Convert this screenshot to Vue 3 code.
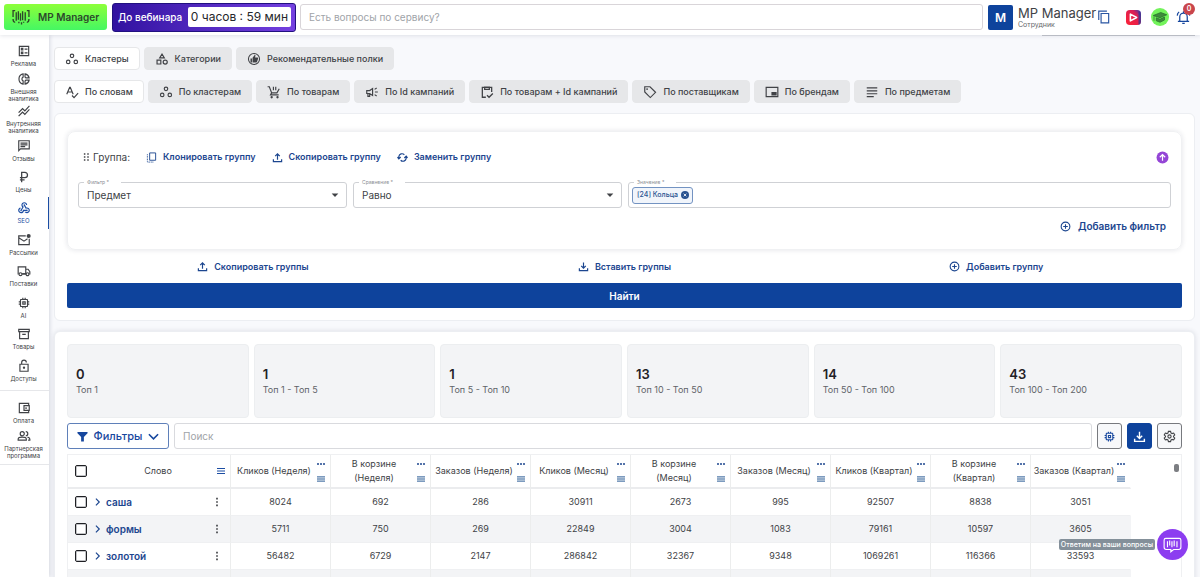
<script setup>
import { ref } from 'vue'

const s = (d, w = 2) => `<path d="${d}" fill="none" stroke="currentColor" stroke-width="${w}"/>`
const f = (d) => `<path d="${d}" fill="currentColor" fill-rule="evenodd"/>`

const icons = {
  ballot: s('M4 4h16v16H4zM7.500 7.500h2.500v2.500H7.500zM7.500 14h2.500v2.500H7.500zM13 8.700h5M13 15.300h5'),
  pie: s('M10.500 3.200a9 9 0 0 0 0 17.600v-5.600a3.500 3.500 0 0 1 0-6.400zM13.800 3.200a9 9 0 0 1 7 7h-5.600l-1.400-1.600zM13.800 20.800a9 9 0 0 0 7-7h-5.600l-1.400 1.600z'),
  trend: f('M2 19.990l7.500-7.510 4 4 7.090-7.970L22 9.920l-8.500 9.560-4-4-6 6.010zM3.500 15.490l6-6.010 4 4L22 3.920l-1.410-1.410-7.090 7.970-4-4L2 13.990z'),
  message: s('M3 3h18v14H6l-3 3zM6 7h12M6 10h12M6 13h8'),
  ruble: s('M8 21V4h5.500a4.500 4.500 0 0 1 0 9H5M5 17h8', 2.200),
  webhook: f('M10 15h5.880c.27-.31.67-.5 1.120-.5.83 0 1.500.67 1.500 1.500s-.67 1.500-1.500 1.500c-.44 0-.84-.19-1.120-.5H11.900c-.46 2.280-2.480 4-4.900 4-2.760 0-5-2.240-5-5 0-2.420 1.720-4.440 4-4.900v2.070c-1.160.41-2 1.530-2 2.830 0 1.650 1.350 3 3 3s3-1.350 3-3v-1zm2.500-11c1.650 0 3 1.350 3 3h2c0-2.760-2.240-5-5-5s-5 2.240-5 5c0 1.430.6 2.710 1.550 3.620l-2.350 3.900c-.68.14-1.200.75-1.200 1.480 0 .83.67 1.500 1.500 1.500s1.500-.67 1.500-1.500c0-.16-.02-.31-.07-.45l3.380-5.630C10.490 9.610 9.500 8.420 9.500 7c0-1.650 1.350-3 3-3zM17 13c-.64 0-1.230.2-1.720.54l-3.050-5.070C11.530 8.350 11 7.740 11 7c0-.83.67-1.500 1.500-1.500S14 6.170 14 7c0 .15-.02.29-.06.43l2.190 3.650c.28-.05.57-.08.87-.08 2.760 0 5 2.240 5 5s-2.240 5-5 5c-1.850 0-3.470-1.010-4.330-2.500h2.670c.48.32 1.050.5 1.660.5 1.650 0 3-1.350 3-3s-1.350-3-3-3z'),
  mail: s('M15 5H3v15h18V10M3 8l9 6 6-4') + '<circle cx="20" cy="5" r="3.500" fill="currentColor"/>',
  truck: s('M3 17H2V5h13v12H9M15 9h4l3 4v4h-1') + s('M8.500 17.500a2.500 2.500 0 1 1-5 0 2.500 2.500 0 0 1 5 0zM20.500 17.500a2.500 2.500 0 1 1-5 0 2.500 2.500 0 0 1 5 0zM9 17h6'),
  chip: f('M15 9H9v6h6V9zm-2 4h-2v-2h2v2zm8-2V9h-2V7c0-1.100-.9-2-2-2h-2V3h-2v2h-2V3H9v2H7c-1.100 0-2 .9-2 2v2H3v2h2v2H3v2h2v2c0 1.100.9 2 2 2h2v2h2v-2h2v2h2v-2h2c1.100 0 2-.9 2-2v-2h2v-2h-2v-2h2zm-4 6H7V7h10v10z'),
  archive: s('M3 4h18v4H3zM4.500 8v12h15V8M9 12.500h6'),
  lock: s('M5 9h14v12H5zM8 9V6a4 4 0 0 1 8 0') + '<circle cx="12" cy="15" r="2" fill="currentColor"/>',
  wallet: s('M20 7V4H4v16h16v-3M12 8h9v8h-9z') + '<circle cx="15.500" cy="12" r="1.500" fill="currentColor"/>',
  group: s('M12.500 8a3.500 3.500 0 1 1-7 0 3.500 3.500 0 0 1 7 0zM2 19v-2c0-2 4-3.200 7-3.200s7 1.200 7 3.200v2zM15 4.500a3.500 3.500 0 0 1 0 7M18 14c2 .6 4 1.500 4 3v2h-3'),
  clusters: s('M15 6.500a3 3 0 1 1-6 0 3 3 0 0 1 6 0zM8.500 17a3 3 0 1 1-6 0 3 3 0 0 1 6 0zM21.500 17a3 3 0 1 1-6 0 3 3 0 0 1 6 0z'),
  category: s('M12 3.500l4 6.500H8zM3.500 14h6.500v6.500H3.500zM21 17.300a3.500 3.500 0 1 1-7 0 3.500 3.500 0 0 1 7 0z'),
  recommend: s('M21.500 12a9.500 9.500 0 1 1-19 0 9.500 9.500 0 0 1 19 0z', 1.800) + f('M6 11h2.500v7H6zM9.500 10l4-5.500 1 .8-.6 4.200h4.600l.6 1.500-2 6-1.200 1.200H9.500z'),
  spell: s('M3 16L8 4h1l5 12M5 12h7M12 18l3.500 3.500 7-7.500'),
  cart: s('M1 3h3l4 10.500h9l4-7M8 13.500L6 17H20M11 3v6M15 3v6', 2) + '<circle cx="8" cy="21" r="2" fill="currentColor"/><circle cx="18" cy="21" r="2" fill="currentColor"/>',
  campaign: s('M3 9.500h5l5-3.500v12l-5-3.500H3zM5 15v4.500h3V15M17 12h5M16.500 7.500l3.500-2.500M16.500 16.500l3.500 2.500'),
  clipboard: s('M10 21H4V4h16v8M8 3.500h8v4H8zM12 17.500l3.500 3.500L22 14.500', 2.200),
  tag: s('M3 3h9l9.500 9.500-9 9L3 12z') + '<circle cx="7" cy="7" r="1.500" fill="currentColor"/>',
  brand: s('M2 4h20v16H2z') + f('M11 12h9v6h-9z'),
  lines: s('M3 5h18M3 10h18M3 15h18M3 20h12'),
  drag: f('M5 2h4v4H5zM5 10h4v4H5zM5 18h4v4H5zM14 2h4v4h-4zM14 10h4v4h-4zM14 18h4v4h-4z'),
  clone: s('M8 2h13v16H8z') + s('M3 5v17h14', 2).replace('/>', ' stroke-dasharray="2 1.500"/>'),
  upload: s('M12 17V5M7 9l5-5 5 5M3 16v5h18v-5', 2.600),
  download: s('M12 3v12M7 10.500l5 5 5-5M3 16v5h18v-5', 2.600),
  swap: s('M4 14V10A7 7 0 0 1 16 6M20 10v4A7 7 0 0 1 8 18M1 11l3 4 4-4M16 13l4-4 3 4', 2.600),
  plus: s('M21.500 12a9.500 9.500 0 1 1-19 0 9.500 9.500 0 0 1 19 0zM12 7v10M7 12h10', 2.400),
  up: '<circle cx="12" cy="12" r="11" fill="currentColor"/><path d="M12 18V7M7 11.500L12 6.500l5 5" fill="none" stroke="#fff" stroke-width="2.200"/>',
  close: '<circle cx="12" cy="12" r="12" fill="currentColor"/><path d="M8 8l8 8M16 8l-8 8" stroke="#fff" stroke-width="2.500"/>',
  caret: f('M4 8.500h16L12 17z'),
  funnel: f('M1 2h22v3l-8 8v10H9v-10L1 5z'),
  down: s('M2 7l10 10 10-10', 3.500),
  right: s('M7 4l8 8-8 8', 2.800),
  gear: s('M10 2.500h4l.7 3 2 1.100 3-.9 2 3.500-2.300 2.100v1.400l2.300 2.100-2 3.500-3-.9-2 1.100-.7 3h-4l-.7-3-2-1.100-3 .9-2-3.500 2.300-2.100v-1.400L2.300 9.200l2-3.500 3 .9 2-1.100zM15 12a3 3 0 1 1-6 0 3 3 0 0 1 6 0z'),
  kebab: f('M10 2h4v4h-4zM10 10h4v4h-4zM10 18h4v4h-4z'),
  copy: s('M17 2H3v15M7 6h13v16H7z'),
  bell: s('M6 18v-7a6 6 0 0 1 12 0v7M3 18h18M12 2v3M10 21.500h4M2 9a8 8 0 0 1 3-6M22 9a8 8 0 0 0-3-6'),
}

const nav = [
  ['ballot', 'Реклама'], ['pie', 'Внешняя аналитика'], ['trend', 'Внутренняя аналитика'], ['message', 'Отзывы'],
  ['ruble', 'Цены'], ['webhook', 'SEO'], ['mail', 'Рассылки'], ['truck', 'Поставки'], ['chip', 'AI'],
  ['archive', 'Товары'], ['lock', 'Доступы'],
]
const navExtra = [['wallet', 'Оплата'], ['group', 'Партнерская программа']]
const modes = [['clusters', 'Кластеры'], ['category', 'Категории'], ['recommend', 'Рекомендательные полки']]
const views = [
  ['spell', 'По словам'], ['clusters', 'По кластерам'], ['cart', 'По товарам'], ['campaign', 'По Id кампаний'],
  ['clipboard', 'По товарам + Id кампаний'], ['tag', 'По поставщикам'], ['brand', 'По брендам'], ['lines', 'По предметам'],
]
const stats = [
  ['0', 'Топ 1'], ['1', 'Топ 1 - Топ 5'], ['1', 'Топ 5 - Топ 10'], ['13', 'Топ 10 - Топ 50'],
  ['14', 'Топ 50 - Топ 100'], ['43', 'Топ 100 - Топ 200'],
]
const columns = ['Неделя', 'Месяц', 'Квартал'].flatMap((p) => [`Кликов (${p})`, `В корзине\n(${p})`, `Заказов (${p})`])
const rows = [
  ['саша', 8024, 692, 286, 30911, 2673, 995, 92507, 8838, 3051],
  ['формы', 5711, 750, 269, 22849, 3004, 1083, 79161, 10597, 3605],
  ['золотой', 56482, 6729, 2147, 286842, 32367, 9348, 1069261, 116366, 33593],
]
const mode = ref(0)
const view = ref(0)
const section = ref('SEO')
</script>

<template>
  <div class="app">
    <header class="top">
      <button class="brand">
        <svg viewBox="0 0 34 30"><path d="M6 3H2v12M6 25c-3 0-4-3-4-6M28 3h4v12M28 25c3 0 4-3 4-6M8 6v16M12 4v16M16 8v14M20 4v17M25 6v16M13 24v3M18 25v4M22 24v2" fill="none" stroke="currentColor" stroke-width="2.500" /></svg>
        MP Manager
      </button>
      <div class="webinar"><span>До вебинара</span><strong>0 часов : 59 мин</strong></div>
      <input class="ask" type="text" placeholder="Есть вопросы по сервису?" aria-label="Есть вопросы по сервису?">
      <div class="user">
        <div class="avatar">M</div>
        <div class="who"><span>MP Manager</span><small>Сотрудник</small></div>
        <button class="plain copy" aria-label="Копировать"><svg viewBox="0 0 24 24" v-html="icons.copy" /></button>
      </div>
      <button class="plain video" aria-label="Видео">
        <svg viewBox="0 0 24 24">
          <defs><linearGradient id="vid" x1="0" y1="1" x2="1" y2="0"><stop offset=".2" stop-color="#f5213d" /><stop offset=".7" stop-color="#d91f55" /><stop offset="1" stop-color="#2b40b8" /></linearGradient></defs>
          <rect width="24" height="24" rx="6" fill="url(#vid)" /><path d="M20 2q4 1 4 5v12q0 4-4 5z" fill="#243c9c" opacity=".7" /><path d="M7 6.500v11L17 12z" fill="none" stroke="#fff" stroke-width="2.500" stroke-linejoin="round" />
        </svg>
      </button>
      <button class="plain learn" aria-label="Обучение">
        <svg viewBox="0 0 24 24"><circle cx="12" cy="12" r="12" fill="#73f35b" /><path d="M3 10l10-4 8 3-9 4zM7 13v4l5 2 6-3v-4l-6 3zM4 11v6" fill="#3f8a3c" stroke="#26702b" /></svg>
      </button>
      <button class="plain bell" aria-label="Уведомления"><svg viewBox="0 0 24 24" v-html="icons.bell" /><span class="badge">0</span></button>
    </header>

    <div class="body">
      <nav class="side">
        <div class="group main-group">
          <a v-for="[icon, label] in nav" :key="label" href="#" :class="{ active: section === label }" @click.prevent="section = label">
            <svg viewBox="0 0 24 24" v-html="icons[icon]" /><span>{{ label }}</span>
          </a>
        </div>
        <div class="group extra-group">
          <a v-for="[icon, label] in navExtra" :key="label" href="#" @click.prevent="section = label">
            <svg viewBox="0 0 24 24" v-html="icons[icon]" /><span>{{ label }}</span>
          </a>
        </div>
      </nav>

      <main class="content">
        <div class="peek" />
        <div class="tabs modes">
          <button v-for="([icon, label], i) in modes" :key="label" :class="{ on: mode === i }" @click="mode = i">
            <svg viewBox="0 0 24 24" v-html="icons[icon]" />{{ label }}
          </button>
        </div>
        <div class="tabs">
          <button v-for="([icon, label], i) in views" :key="label" :class="{ on: view === i }" @click="view = i">
            <svg viewBox="0 0 24 24" v-html="icons[icon]" />{{ label }}
          </button>
        </div>

        <section class="card query">
          <div class="filter-group">
            <div class="group-head">
              <span class="group-name"><svg viewBox="0 0 24 24" v-html="icons.drag" />Группа:</span>
              <button class="link"><svg viewBox="0 0 24 24" v-html="icons.clone" />Клонировать группу</button>
              <button class="link"><svg viewBox="0 0 24 24" v-html="icons.upload" />Скопировать группу</button>
              <button class="link"><svg viewBox="0 0 24 24" v-html="icons.swap" />Заменить группу</button>
              <button class="plain collapse" aria-label="Свернуть"><svg viewBox="0 0 24 24" v-html="icons.up" /></button>
            </div>
            <div class="fields">
              <div class="field">
                <label for="f-subject">Фильтр *</label>
                <select id="f-subject"><option>Предмет</option></select>
                <svg class="caret" viewBox="0 0 24 24" v-html="icons.caret" />
              </div>
              <div class="field">
                <label for="f-compare">Сравнение *</label>
                <select id="f-compare"><option>Равно</option></select>
                <svg class="caret" viewBox="0 0 24 24" v-html="icons.caret" />
              </div>
              <div class="field">
                <label for="f-value">Значение *</label>
                <span class="chip">[24] Кольца<button class="plain" aria-label="Удалить"><svg viewBox="0 0 24 24" v-html="icons.close" /></button></span>
                <input id="f-value" type="text">
              </div>
            </div>
            <button class="link add-filter"><svg viewBox="0 0 24 24" v-html="icons.plus" />Добавить фильтр</button>
          </div>
          <div class="group-actions">
            <button class="link"><svg viewBox="0 0 24 24" v-html="icons.upload" />Скопировать группы</button>
            <button class="link"><svg viewBox="0 0 24 24" v-html="icons.download" />Вставить группы</button>
            <button class="link"><svg viewBox="0 0 24 24" v-html="icons.plus" />Добавить группу</button>
          </div>
          <button class="find">Найти</button>
        </section>

        <section class="card results">
          <div class="stats">
            <div v-for="[value, label] in stats" :key="label" class="stat"><b>{{ value }}</b><span>{{ label }}</span></div>
          </div>
          <div class="toolbar">
            <button class="filters"><svg viewBox="0 0 24 24" v-html="icons.funnel" />Фильтры<svg viewBox="0 0 24 24" v-html="icons.down" /></button>
            <input type="text" placeholder="Поиск" aria-label="Поиск">
            <button class="square blue" aria-label="AI"><svg viewBox="0 0 24 24" v-html="icons.chip" /></button>
            <button class="square solid" aria-label="Скачать"><svg viewBox="0 0 24 24" v-html="icons.download" /></button>
            <button class="square" aria-label="Настройки"><svg viewBox="0 0 24 24" v-html="icons.gear" /></button>
          </div>
          <div class="table-wrap">
            <table>
              <colgroup><col class="c-word"><col v-for="c in columns" :key="c" class="c-num"></colgroup>
              <thead>
                <tr>
                  <th><div class="word-head"><input type="checkbox" aria-label="Выбрать все"><span>Слово</span><svg class="sort" viewBox="0 0 8 8"><path d="M0 1.500h8M0 4h8M0 6.500h8" stroke="currentColor" /></svg></div></th>
                  <th v-for="c in columns" :key="c">
                    <div class="num-head">
                      <span>{{ c }}</span>
                      <div class="marks">
                        <svg viewBox="0 0 8 8"><path d="M0 4h2M3 4h2M6 4h2" stroke="currentColor" stroke-width="1.500" /></svg>
                        <svg viewBox="0 0 8 8"><rect y="1" width="8" height="6" fill="#a9bdd3" /><path d="M0 1.500h8M0 4h8M0 6.500h8" stroke="#7d9bbf" /></svg>
                      </div>
                    </div>
                  </th>
                </tr>
              </thead>
              <tbody>
                <tr v-for="[word, ...nums] in rows" :key="word">
                  <td>
                    <div class="word-cell">
                      <input type="checkbox" :aria-label="word">
                      <svg viewBox="0 0 24 24" v-html="icons.right" />
                      <a href="#">{{ word }}</a>
                      <button class="plain more" aria-label="Меню"><svg viewBox="0 0 24 24" v-html="icons.kebab" /></button>
                    </div>
                  </td>
                  <td v-for="(n, i) in nums" :key="i">{{ n }}</td>
                </tr>
                <tr>
                  <td><div class="word-cell"><input type="checkbox" aria-label="Выбрать строку"></div></td>
                  <td v-for="c in columns" :key="c" />
                </tr>
              </tbody>
            </table>
            <div class="thumb" />
          </div>
        </section>
      </main>
    </div>

    <div class="help">
      <span>Ответим на ваши вопросы</span>
      <button aria-label="Чат"><svg viewBox="0 0 34 30"><path d="M5 4h24q3 0 3 3v13q0 4-4 4h-9l-5 4v-4H6q-4 0-4-4V7q0-3 3-3zM8 9v11M12 8v9M16 9v11M20 8v10M25 9v11" fill="none" stroke="#fff" stroke-width="2" /></svg></button>
    </div>
  </div>
</template>

<style>
html,
body {
  margin: 0;
  background: #f8f9fc;
}
</style>

<style scoped>
.app,
.app * {
  box-sizing: border-box;
}

.app {
  height: 100vh;
  display: flex;
  flex-direction: column;
  overflow: hidden;
  color: #404246;
  font: 9px/14px Inter, "Open Sans", sans-serif;
}

button,
input,
select {
  font: inherit;
  color: inherit;
  margin: 0;
}

button {
  cursor: pointer;
  white-space: nowrap;
}

svg {
  display: block;
  flex: none;
}

a {
  text-decoration: none;
  color: inherit;
}

.plain {
  border: 0;
  padding: 0;
  background: none;
}

.top {
  position: relative;
  z-index: 2;
  flex: none;
  display: flex;
  align-items: center;
  height: 35px;
  padding: 0 9px 1px 4px;
  background: #fff;
  box-shadow: 0 1px 4px rgba(40, 50, 80, 0.12);
}

.brand {
  display: flex;
  align-items: center;
  gap: 8px;
  width: 103px;
  height: 26px;
  padding: 0 8px;
  border: 0;
  border-radius: 3px;
  background: linear-gradient(#8dff39, #45f763);
  color: #2d472a;
  font-size: 10px;
  font-weight: 600;
}

.brand svg {
  width: 18px;
  height: 16px;
}

.webinar {
  display: flex;
  align-items: center;
  justify-content: space-between;
  width: 184px;
  height: 29px;
  margin: 0 4px 0 5px;
  padding: 0 4px 0 5px;
  border: 1px solid #211080;
  border-radius: 3px;
  background: linear-gradient(90deg, #3112a0, #7440e0);
  color: #fff;
  font-size: 10px;
  font-weight: 500;
  white-space: nowrap;
}

.webinar strong {
  padding: 0 3px;
  border-radius: 2px;
  background: #fff;
  color: #26272b;
  font-size: 12px;
  font-weight: 400;
  line-height: 20px;
}

.ask {
  flex: 1;
  min-width: 0;
  height: 26px;
  padding: 0 8px;
  border: 1px solid #d9d5d9;
  border-radius: 3px;
  background: #fff;
  font-size: 10px;
}

input::placeholder {
  color: #a0a3a8;
  opacity: 1;
}

.user {
  display: flex;
  align-items: center;
  gap: 5px;
  margin-left: 5px;
}

.avatar {
  width: 25px;
  height: 25px;
  border-radius: 2px;
  background: #0e439c;
  color: #fff;
  font-size: 12px;
  font-weight: 600;
  line-height: 25px;
  text-align: center;
}

.who {
  display: flex;
  flex-direction: column;
  width: 74px;
  white-space: nowrap;
  font-size: 13px;
  line-height: 14px;
}

.who small {
  font-size: 7px;
  line-height: 9px;
  color: #66686c;
}

.copy svg {
  width: 14px;
  height: 14px;
  color: #2a56a3;
}

.video {
  margin-left: 15px;
}

.video svg {
  width: 15px;
  height: 15px;
}

.learn {
  margin-left: 10px;
}

.learn svg {
  width: 18px;
  height: 18px;
}

.bell {
  position: relative;
  margin-left: 7px;
  color: #17479e;
}

.bell svg {
  width: 15px;
  height: 15px;
}

.badge {
  position: absolute;
  top: -7px;
  right: -4px;
  width: 12px;
  height: 12px;
  border-radius: 50%;
  background: #c9454b;
  color: #fff;
  font-size: 7px;
  font-weight: 600;
  line-height: 12px;
}

.body {
  flex: 1;
  min-height: 0;
  display: flex;
}

.side {
  flex: none;
  width: 49px;
  background: #fff;
  box-shadow: 1px 0 4px rgba(40, 50, 80, 0.16);
}

.group {
  display: flex;
  flex-direction: column;
  border-bottom: 1px solid #e6e7ea;
}

.main-group {
  height: 356px;
  padding: 5px 0 4px;
}

.extra-group {
  height: 74px;
  padding: 6px 0 4px;
}

.group a {
  flex: 1;
  display: flex;
  flex-direction: column;
  align-items: center;
  justify-content: center;
  gap: 2px;
  padding-right: 1px;
  border-right: 1px solid transparent;
  font-size: 6px;
  line-height: 7px;
  text-align: center;
}

.group a span {
  width: 48px;
}

.group a.active {
  color: #1b4da3;
  border-color: #1b4da3;
}

.group svg {
  width: 14px;
  height: 14px;
}

.content {
  flex: 1;
  min-width: 0;
  padding: 0 5px;
  overflow: hidden;
}

.peek {
  width: 153px;
  height: 1px;
  margin-left: auto;
  background: #c5c8ce;
}

.tabs {
  display: flex;
  gap: 4px;
  margin-bottom: 10px;
}

.modes {
  margin-top: 11px;
}

.tabs button {
  display: flex;
  align-items: center;
  gap: 6px;
  height: 23px;
  padding: 0 10px;
  border: 1px solid #e6e7e9;
  border-radius: 4px;
  background: #e6e7e9;
  font-weight: 500;
}

.tabs button.on {
  background: #fff;
}

.tabs svg {
  width: 14px;
  height: 14px;
}

.card {
  padding: 12px;
  border: 1px solid #eceef2;
  border-radius: 6px;
  background: #fff;
}

.query {
  padding-top: 17px;
  margin-bottom: 10px;
}

.filter-group {
  display: flex;
  flex-direction: column;
  height: 119px;
  padding: 19px 10px 10px;
  border: 1px solid #f0f1f3;
  border-radius: 8px;
  box-shadow: 0 0 5px rgba(40, 50, 80, 0.13);
}

.group-head {
  display: flex;
  align-items: center;
  gap: 16px;
  height: 12px;
  padding: 0 2px 0 4px;
}

.group-name {
  display: flex;
  align-items: center;
  gap: 2px;
  font-size: 10px;
}

.group-name svg {
  width: 9px;
  height: 10px;
}

.link {
  display: flex;
  align-items: center;
  gap: 6px;
  padding: 0;
  border: 0;
  background: none;
  color: #1c468f;
  font-weight: 600;
}

.link svg {
  width: 11px;
  height: 11px;
}

.collapse {
  margin-left: auto;
  color: #9445d6;
}

.collapse svg {
  width: 13px;
  height: 13px;
}

.fields {
  display: grid;
  grid-template-columns: 269fr 269fr 543fr;
  gap: 6px;
  margin-top: 19px;
}

.field {
  position: relative;
  display: flex;
  align-items: center;
  height: 26px;
  min-width: 0;
  border: 1px solid #cfd1d5;
  border-radius: 3px;
}

.field label {
  position: absolute;
  top: -5px;
  left: 5px;
  padding: 0 12px 0 3px;
  background: #fff;
  color: #8b8e94;
  font-size: 5px;
  line-height: 8px;
}

.field select {
  width: 100%;
  height: 100%;
  padding: 0 8px;
  border: 0;
  background: none;
  appearance: none;
  font-size: 10px;
}

.field .caret {
  position: absolute;
  right: 6px;
  width: 10px;
  height: 10px;
  pointer-events: none;
}

.field input {
  flex: 1;
  min-width: 0;
  height: 100%;
  border: 0;
  background: none;
}

.chip {
  display: flex;
  align-items: center;
  gap: 3px;
  height: 17px;
  margin-left: 3px;
  padding: 0 3px 0 4px;
  border: 1px solid #7393c2;
  border-radius: 3px;
  background: #f1f5fb;
  color: #2a5390;
  font-size: 7px;
  font-weight: 500;
}

.chip svg {
  width: 8px;
  height: 8px;
}

.add-filter {
  align-self: flex-end;
  gap: 7px;
  margin: 11px 5px 0 0;
  font-size: 10px;
}

.group-actions {
  display: grid;
  grid-template-columns: repeat(3, 1fr);
  justify-items: center;
  align-items: center;
  height: 33px;
}

.find {
  display: block;
  width: 100%;
  height: 25px;
  border: 0;
  border-radius: 2px;
  background: #0e439c;
  color: #fff;
  font-size: 10px;
  font-weight: 600;
}

.results {
  height: 400px;
  box-shadow: 0 0 5px rgba(40, 50, 80, 0.13);
}

.stats {
  display: grid;
  grid-template-columns: repeat(6, 1fr);
  gap: 5px;
}

.stat {
  display: flex;
  flex-direction: column;
  justify-content: center;
  height: 74px;
  padding: 0 8px;
  border: 1px solid #eceef0;
  border-radius: 4px;
  background: #f3f4f6;
}

.stat b {
  color: #1f2126;
  font-size: 13px;
  font-weight: 600;
  line-height: 18px;
}

.stat span {
  color: #606368;
}

.toolbar {
  display: flex;
  gap: 5px;
  margin: 5px 0;
}

.toolbar input {
  flex: 1;
  min-width: 0;
  height: 26px;
  padding: 0 8px;
  border: 1px solid #d9dade;
  border-radius: 3px;
  font-size: 10px;
}

.filters {
  display: flex;
  align-items: center;
  justify-content: space-between;
  width: 102px;
  height: 26px;
  padding: 0 9px;
  border: 1px solid #5f80b9;
  border-radius: 3px;
  background: #fff;
  color: #17479e;
  font-size: 11px;
  font-weight: 500;
}

.filters svg {
  width: 11px;
  height: 11px;
}

.square {
  display: grid;
  place-items: center;
  width: 25px;
  height: 26px;
  padding: 0;
  border: 1px solid #77797e;
  border-radius: 3px;
  background: #f7f8fa;
}

.square svg {
  width: 13px;
  height: 13px;
}

.square.blue {
  color: #17479e;
}

.square.solid {
  border-color: #0e439c;
  background: #0e439c;
  color: #fff;
}

.table-wrap {
  position: relative;
  overflow: hidden;
  border: 1px solid #eff0f2;
}

.thumb {
  position: absolute;
  top: 9px;
  right: 2px;
  width: 5px;
  height: 8px;
  border-radius: 2px;
  background: #7c7e82;
}

table {
  width: 1063px;
  table-layout: fixed;
  border-collapse: separate;
  border-spacing: 0;
}

.c-word {
  width: 163px;
}

.c-num {
  width: 100px;
}

th,
td {
  padding: 0;
  text-align: center;
  font-weight: 400;
  border-right: 1px solid #eceded;
}

th:last-child,
td:last-child {
  border-right-color: transparent;
}

th {
  height: 34px;
  border-bottom: 2px solid #ebecee;
}

td {
  height: 27px;
  border-bottom: 1px solid #eff0f2;
}

tbody tr:nth-child(even) {
  background: #f3f4f6;
}

.word-head,
.word-cell {
  display: flex;
  align-items: center;
  padding: 0 5px 0 7px;
}

.word-head span {
  flex: 1;
  padding-left: 12px;
}

.sort {
  width: 8px;
  height: 8px;
  color: #1b4da3;
}

input[type="checkbox"] {
  appearance: none;
  flex: none;
  width: 12px;
  height: 12px;
  border: 1px solid #1f2024;
  border-radius: 2px;
  background: #fff;
  box-shadow: inset 0 0 0 1px #c4c5c8;
}

input[type="checkbox"]:checked {
  background: #0e439c;
}

.word-cell svg {
  width: 10px;
  height: 10px;
}

.word-cell > svg {
  margin: 0 3px 0 6px;
  color: #1c468f;
}

.word-cell a {
  flex: 1;
  color: #1c468f;
  font-size: 10px;
  font-weight: 600;
  text-align: left;
}

.word-cell .more {
  padding: 0 3px;
}

.num-head {
  display: flex;
  align-items: center;
}

.num-head span {
  flex: 1;
  white-space: pre-line;
}

.marks {
  display: flex;
  flex-direction: column;
  gap: 7px;
  width: 13px;
  color: #1c468f;
}

.marks svg {
  width: 8px;
  height: 8px;
}

.help {
  position: absolute;
  right: 12px;
  bottom: 17px;
  display: flex;
  align-items: center;
  gap: 2px;
}

.help span {
  padding: 0 2px;
  border-radius: 2px;
  background: #84909a;
  color: #fff;
  font-size: 7px;
  font-weight: 500;
  line-height: 11px;
}

.help button {
  display: grid;
  place-items: center;
  width: 31px;
  height: 31px;
  padding: 0;
  border: 0;
  border-radius: 50%;
  background: #8c3df0;
}

.help svg {
  width: 19px;
  height: 17px;
}
</style>
